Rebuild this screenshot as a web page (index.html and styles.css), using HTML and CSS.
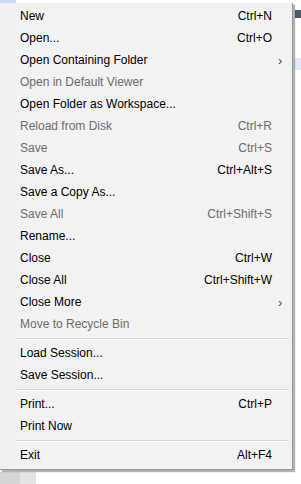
FILE: index.html
```html
<!DOCTYPE html>
<html lang="en">
<head>
    <meta charset="UTF-8">
    <meta name="viewport" content="width=device-width, initial-scale=1.0">
    <title>File Menu</title>
    <link rel="stylesheet" href="styles.css">
</head>
<body>
    <div class="app">
        <div class="tab-hint"></div>
        <div class="toolbar-bits"></div>
        <div class="row-hint"></div>
        <div class="bottom-strip">
            <div class="strip-dark"></div>
            <div class="strip-light"></div>
        </div>
    </div>

    <div class="menu">
        <div class="item"><span class="label">New</span><span class="key">Ctrl+N</span><span class="arrow"></span></div>
        <div class="item"><span class="label">Open...</span><span class="key">Ctrl+O</span><span class="arrow"></span></div>
        <div class="item"><span class="label">Open Containing Folder</span><span class="key"></span><span class="arrow">&#8250;</span></div>
        <div class="item disabled"><span class="label">Open in Default Viewer</span><span class="key"></span><span class="arrow"></span></div>
        <div class="item"><span class="label">Open Folder as Workspace...</span><span class="key"></span><span class="arrow"></span></div>
        <div class="item disabled"><span class="label">Reload from Disk</span><span class="key">Ctrl+R</span><span class="arrow"></span></div>
        <div class="item disabled"><span class="label">Save</span><span class="key">Ctrl+S</span><span class="arrow"></span></div>
        <div class="item"><span class="label">Save As...</span><span class="key">Ctrl+Alt+S</span><span class="arrow"></span></div>
        <div class="item"><span class="label">Save a Copy As...</span><span class="key"></span><span class="arrow"></span></div>
        <div class="item disabled"><span class="label">Save All</span><span class="key">Ctrl+Shift+S</span><span class="arrow"></span></div>
        <div class="item"><span class="label">Rename...</span><span class="key"></span><span class="arrow"></span></div>
        <div class="item"><span class="label">Close</span><span class="key">Ctrl+W</span><span class="arrow"></span></div>
        <div class="item"><span class="label">Close All</span><span class="key">Ctrl+Shift+W</span><span class="arrow"></span></div>
        <div class="item"><span class="label">Close More</span><span class="key"></span><span class="arrow">&#8250;</span></div>
        <div class="item disabled"><span class="label">Move to Recycle Bin</span><span class="key"></span><span class="arrow"></span></div>
        <div class="separator"></div>
        <div class="item"><span class="label">Load Session...</span><span class="key"></span><span class="arrow"></span></div>
        <div class="item"><span class="label">Save Session...</span><span class="key"></span><span class="arrow"></span></div>
        <div class="separator"></div>
        <div class="item"><span class="label">Print...</span><span class="key">Ctrl+P</span><span class="arrow"></span></div>
        <div class="item"><span class="label">Print Now</span><span class="key"></span><span class="arrow"></span></div>
        <div class="separator"></div>
        <div class="item"><span class="label">Exit</span><span class="key">Alt+F4</span><span class="arrow"></span></div>
    </div>
</body>
</html>
```

FILE: styles.css
```css
body {
    margin: 0;
    background-color: #ffffff;
    font-family: "Liberation Sans", Arial, sans-serif;
    font-size: 12px;
    color: #000000;
    overflow: hidden;
}
.app {
    position: relative;
    width: 301px;
    height: 484px;
}
.tab-hint {
    position: absolute;
    left: 0;
    top: 0;
    width: 16px;
    height: 3px;
    background-color: #c5dcf3;
}
.toolbar-bits {
    position: absolute;
    left: 295px;
    top: 10px;
    width: 6px;
    height: 8px;
    background-color: #4a5a70;
}
.row-hint {
    position: absolute;
    left: 295px;
    top: 58px;
    width: 6px;
    height: 12px;
    background-color: #dfe9f6;
}
.bottom-strip {
    position: absolute;
    left: 0;
    top: 472px;
    display: flex;
    height: 12px;
}
.strip-dark {
    width: 20px;
    background-color: #d6d6d6;
}
.strip-light {
    width: 16px;
    background-color: #e4e4e4;
}

/* popup menu, laid over the editor */
.menu {
    position: absolute;
    left: 0;
    top: 3px;
    width: 292px;
    padding: 2px 0 3px 0;
    background-color: #f2f2f2;
    background-image: linear-gradient(to right, #f0f0f0 16px, #f2f2f2 16px);
    border-right: 1px solid #979797;
    border-bottom: 1px solid #979797;
    box-shadow: 2px 2px 1px rgba(0, 0, 0, 0.3);
}
.item {
    display: grid;
    grid-template-columns: 1fr auto 20px;
    align-items: center;
    height: 22px;
    padding-left: 20px;
}
.item.disabled {
    color: #6d6d6d;
}
.key {
    text-align: right;
}
.arrow {
    text-align: left;
    padding-left: 6px;
    font-size: 13px;
    color: #4d4d4d;
}
.separator {
    height: 1px;
    margin: 3px 3px 2px 16px;
    background-color: #d7d7d7;
    border-bottom: 1px solid #ffffff;
}
```
